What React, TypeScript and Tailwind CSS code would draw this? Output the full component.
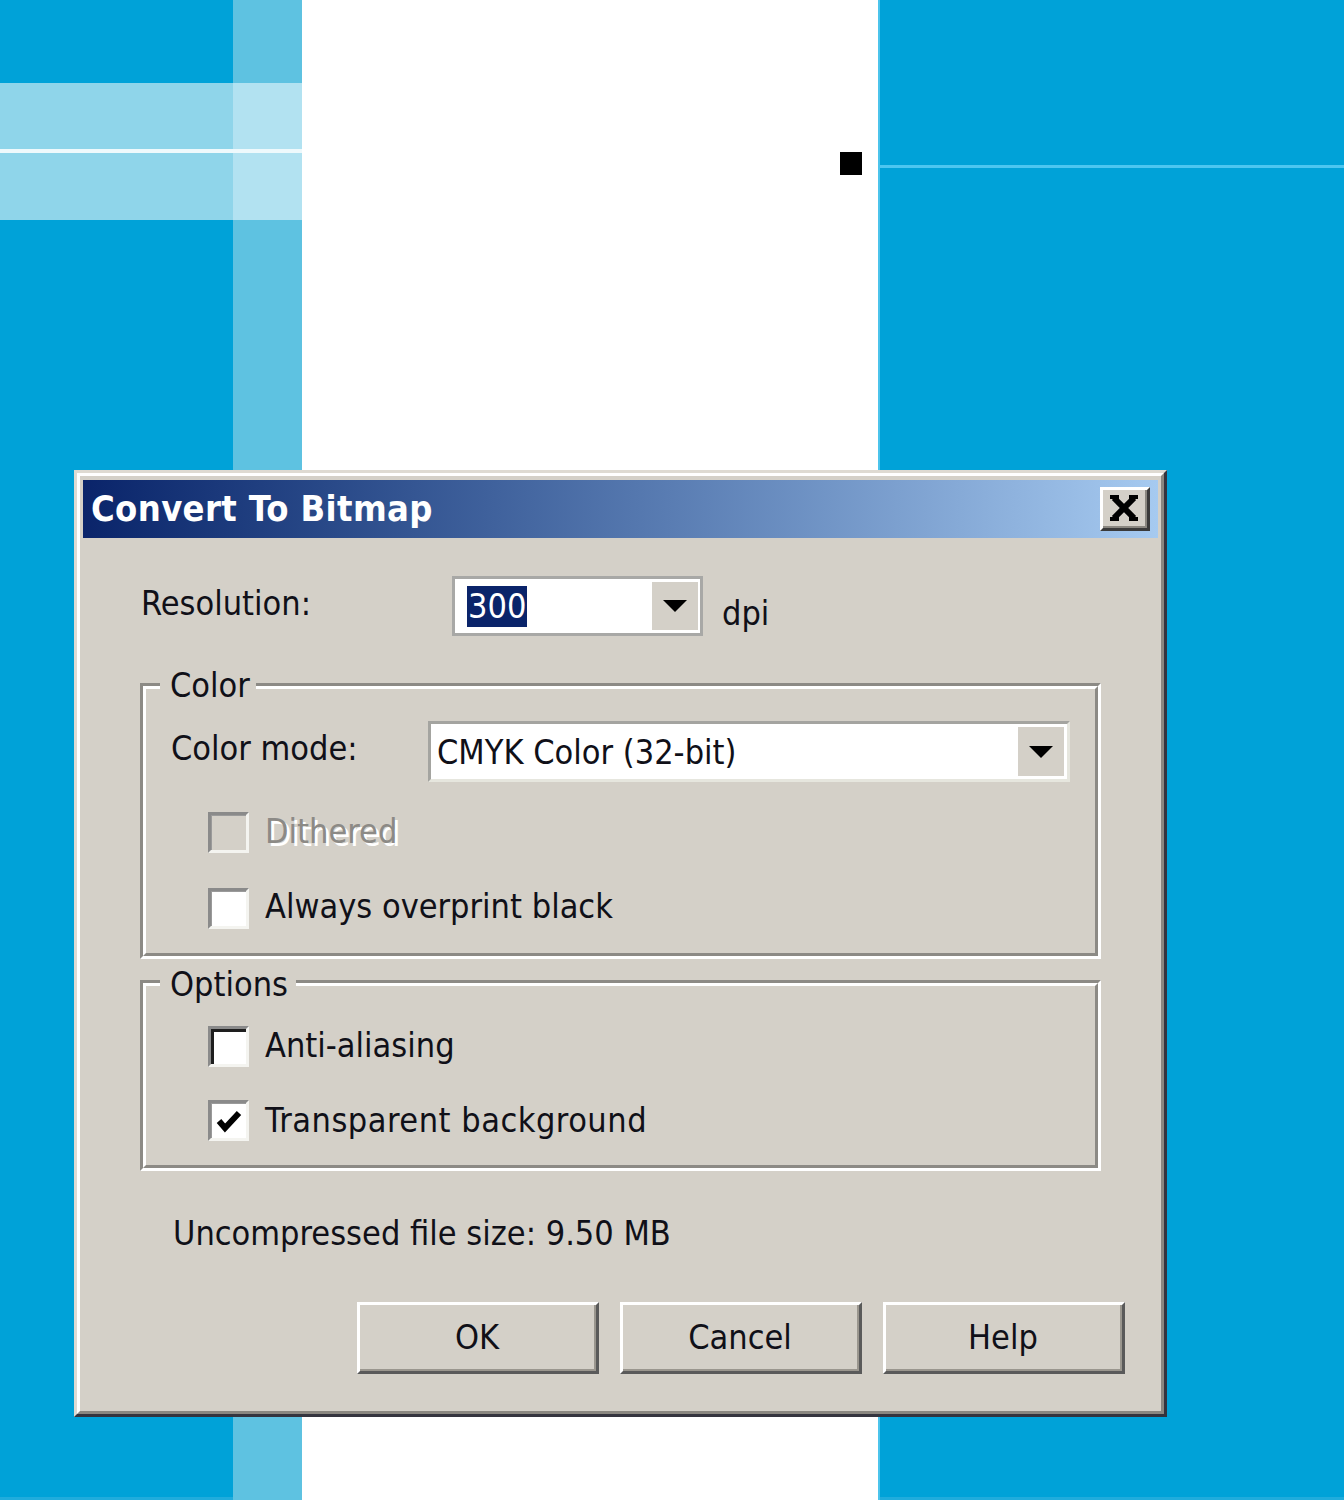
import React from "react";

const FONT = "font-['DejaVu_Sans_Condensed','Liberation_Sans',sans-serif]";

function DropArrow() {
  return (
    <svg width="24" height="12" viewBox="0 0 24 12">
      <polygon points="0,0 24,0 12,12" fill="#000" />
    </svg>
  );
}

function Checkbox({
  variant,
  checked,
}: {
  variant: "disabled" | "normal" | "dark";
  checked?: boolean;
}) {
  const fill = variant === "disabled" ? "bg-[#d4d0c8]" : "bg-white";
  const inner =
    variant === "dark"
      ? "border-t-[3px] border-l-[3px] border-[#1e1e1e]"
      : "border-t-[1px] border-l-[1px] border-[#9a9a9a]";
  return (
    <div className="w-[41px] h-[41px] shrink-0 border-t-[3px] border-l-[3px] border-b-[3px] border-r-[3px] border-t-[#8a8a8a] border-l-[#8a8a8a] border-b-[#f4f4f0] border-r-[#f4f4f0]">
      <div className={`w-full h-full ${inner} ${fill} flex items-center justify-center`}>
        {checked && (
          <svg width="30" height="30" viewBox="0 0 30 30">
            <polyline
              points="5,15 11,22 25,7"
              fill="none"
              stroke="#000"
              strokeWidth="6"
              strokeLinejoin="miter"
            />
          </svg>
        )}
      </div>
    </div>
  );
}

function GroupBox({
  label,
  labelWidth,
  labelTop,
  className,
  children,
}: {
  label: string;
  labelWidth: string;
  labelTop: string;
  className: string;
  children: React.ReactNode;
}) {
  return (
    <div className={`relative ${className}`}>
      <div className="h-full border-t-[3px] border-l-[3px] border-b-[3px] border-r-[3px] border-t-[#8c8a85] border-l-[#8c8a85] border-b-white border-r-white">
        <div className="h-full border-t-[3px] border-l-[3px] border-b-[3px] border-r-[3px] border-t-white border-l-white border-b-[#8c8a85] border-r-[#8c8a85]">
          {children}
        </div>
      </div>
      <div
        className={`absolute left-[20px] ${labelTop} h-[40px] ${labelWidth} bg-[#d4d0c8] flex items-center pl-[10px] text-[34px] leading-none text-[#101018]`}
      >
        {label}
      </div>
    </div>
  );
}

function Button({ label }: { label: string }) {
  return (
    <div className="w-[242px] h-[72px] border-t-[3px] border-l-[3px] border-b-[3px] border-r-[3px] border-t-white border-l-white border-b-[#5a5a5a] border-r-[#5a5a5a]">
      <div className="w-full h-full border-b-[2px] border-r-[2px] border-[#9a968e] bg-[#d4d0c8] flex items-center justify-center text-[34px] leading-none text-[#101018]">
        {label}
      </div>
    </div>
  );
}

export default function App() {
  return (
    <div className={`relative w-[1344px] h-[1500px] overflow-hidden flex ${FONT}`}>
      {/* background canvas */}
      <div className="w-[233px] h-full flex flex-col">
        <div className="h-[83px] bg-[#00a2d8]" />
        <div className="h-[66px] bg-[#8fd5ea]" />
        <div className="h-[4px] bg-[#eef9fc]" />
        <div className="h-[67px] bg-[#8fd5ea]" />
        <div className="flex-1 bg-[#00a2d8]" />
        <div className="h-[3px] bg-[#20acdc]" />
      </div>
      <div className="w-[69px] h-full flex flex-col">
        <div className="h-[83px] bg-[#5ec2e1]" />
        <div className="h-[66px] bg-[#b2e2f1]" />
        <div className="h-[4px] bg-[#eef9fc]" />
        <div className="h-[67px] bg-[#b2e2f1]" />
        <div className="flex-1 bg-[#5ec2e1]" />
      </div>
      <div className="relative w-[576px] h-full bg-white">
        <div className="absolute left-[538px] top-[152px] w-[22px] h-[23px] bg-black" />
      </div>
      <div className="flex-1 h-full flex flex-col border-l-[2px] border-[#4cc4ec]">
        <div className="h-[165px] bg-[#00a2d8]" />
        <div className="h-[3px] bg-[#4cc6f0]" />
        <div className="flex-1 bg-[#00a2d8]" />
        <div className="h-[3px] bg-[#20acdc]" />
      </div>

      {/* dialog window */}
      <div className="absolute left-[74px] top-[470px] w-[1093px] h-[947px] border-t-[3px] border-l-[3px] border-b-[3px] border-r-[3px] border-t-[#dedad2] border-l-[#dedad2] border-b-[#34343e] border-r-[#34343e]">
        <div className="w-full h-full border-t-[3px] border-l-[3px] border-b-[3px] border-r-[3px] border-t-white border-l-white border-b-[#8a8780] border-r-[#8a8780] bg-[#d4d0c8] p-[3px] pt-[4px] flex flex-col">
          {/* title bar */}
          <div className="h-[58px] shrink-0 flex items-center pl-[8px] bg-gradient-to-r from-[#0a246a] to-[#a6caf0]">
            <span className="text-[36px] font-bold leading-none text-white tracking-[0.35px]">
              Convert To Bitmap
            </span>
            <div className="ml-auto mr-[8px] w-[50px] h-[44px] border-t-[3px] border-l-[3px] border-b-[3px] border-r-[3px] border-t-white border-l-white border-b-[#3a3a3a] border-r-[#3a3a3a]">
              <div className="w-full h-full border-b-[2px] border-r-[2px] border-[#8a8780] bg-[#d4d0c8] flex items-center justify-center">
                <svg width="30" height="26" viewBox="0 0 30 26">
                  <path
                    d="M5 3 L25 23 M25 3 L5 23"
                    stroke="#000"
                    strokeWidth="6"
                    fill="none"
                  />
                  <rect x="1" y="0" width="9" height="4" fill="#000" />
                  <rect x="20" y="0" width="9" height="4" fill="#000" />
                  <rect x="1" y="22" width="9" height="4" fill="#000" />
                  <rect x="20" y="22" width="9" height="4" fill="#000" />
                </svg>
              </div>
            </div>
          </div>

          {/* body */}
          <div className="flex flex-col pl-[57px] text-[#101018]">
            {/* Resolution */}
            <div className="mt-[38px] flex items-center h-[60px]">
              <div className="w-[312px] pl-[1px] text-[34px] leading-none -mt-[7px]">Resolution:</div>
              <div className="w-[251px] h-[60px] border-[3px] border-[#a8a8a6] bg-white flex items-center pl-[12px]">
                <div className="h-[41px] px-[1px] bg-[#0a246a] text-white text-[34px] leading-none flex items-center">
                  300
                </div>
                <div className="ml-auto mr-[2px] w-[46px] h-[48px] bg-[#d4d0c8] flex items-center justify-center">
                  <DropArrow />
                </div>
              </div>
              <div className="ml-[19px] mt-[14px] text-[34px] leading-none">dpi</div>
            </div>

            {/* Color group */}
            <GroupBox
              label="Color"
              labelWidth="w-[96px]"
              labelTop="top-[-18px]"
              className="mt-[47px] w-[961px] h-[276px]"
            >
              <div className="flex flex-col">
                <div className="mt-[32px] flex items-center h-[61px] pl-[25px]">
                  <div className="w-[257px] text-[34px] leading-none -mt-[8px]">Color mode:</div>
                  <div className="w-[642px] h-[61px] border-[3px] border-t-[#a4a4a0] border-l-[#a4a4a0] border-b-[#e6e6de] border-r-[#e6e6de] bg-white flex items-center pl-[6px]">
                    <span className="text-[34px] leading-none">CMYK Color (32-bit)</span>
                    <div className="ml-auto mr-[3px] w-[46px] h-[49px] bg-[#d4d0c8] flex items-center justify-center">
                      <DropArrow />
                    </div>
                  </div>
                </div>
                <div className="mt-[30px] flex items-center pl-[62px]">
                  <Checkbox variant="disabled" />
                  <span className="ml-[16px] -mt-[4px] text-[34px] leading-none text-[#8c8a86] [text-shadow:3px_3px_0_#ffffff]">
                    Dithered
                  </span>
                </div>
                <div className="mt-[35px] flex items-center pl-[62px]">
                  <Checkbox variant="normal" />
                  <span className="ml-[16px] -mt-[6px] text-[34px] leading-none">Always overprint black</span>
                </div>
              </div>
            </GroupBox>

            {/* Options group */}
            <GroupBox
              label="Options"
              labelWidth="w-[136px]"
              labelTop="top-[-16px]"
              className="mt-[21px] w-[961px] h-[191px]"
            >
              <div className="flex flex-col">
                <div className="mt-[40px] flex items-center pl-[62px]">
                  <Checkbox variant="dark" />
                  <span className="ml-[16px] -mt-[4px] text-[34px] leading-none">Anti-aliasing</span>
                </div>
                <div className="mt-[33px] flex items-center pl-[62px]">
                  <Checkbox variant="normal" checked />
                  <span className="ml-[16px] -mt-[2px] text-[34px] leading-none tracking-[0.5px]">
                    Transparent background
                  </span>
                </div>
              </div>
            </GroupBox>

            {/* file size */}
            <div className="mt-[42px] h-[40px] flex items-center pl-[33px] text-[34px] leading-none">
              Uncompressed file size: 9.50 MB
            </div>

            {/* buttons */}
            <div className="mt-[49px] flex gap-[21px] pl-[217px]">
              <Button label="OK" />
              <Button label="Cancel" />
              <Button label="Help" />
            </div>
          </div>
        </div>
      </div>
    </div>
  );
}
